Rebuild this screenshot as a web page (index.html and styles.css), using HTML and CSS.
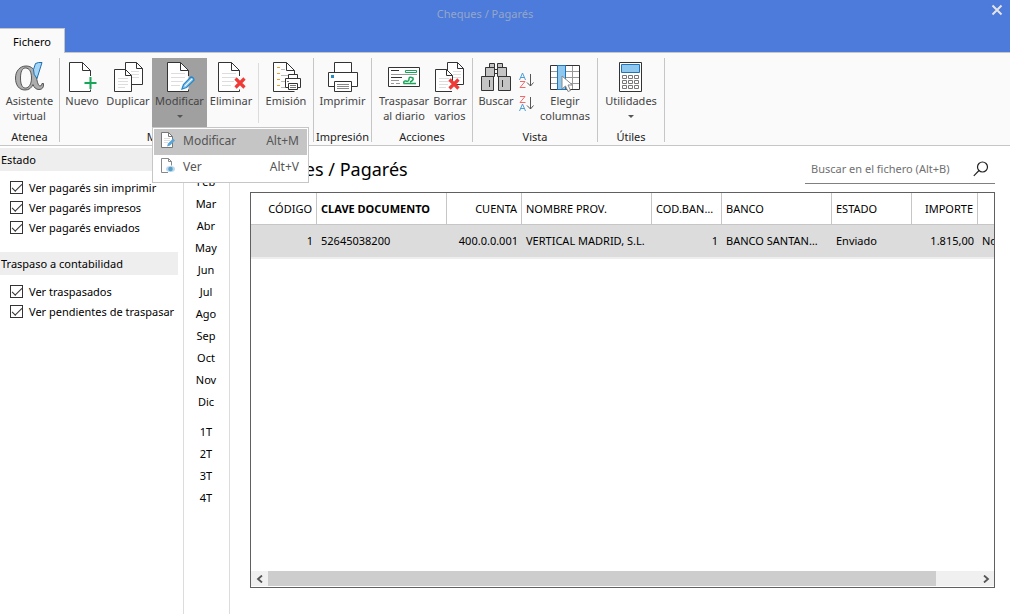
FILE: index.html
```html
<!DOCTYPE html>
<html lang="es">
<head>
<meta charset="utf-8">
<title>Cheques / Pagarés</title>
<link rel="stylesheet" href="styles.css">
</head>
<body>
<svg class="defs" aria-hidden="true">
  <defs>
    <symbol id="page" viewBox="0 0 32 32">
      <path d="M3.5 1.5h13l8 8v21h-21z" fill="#fff"/>
      <path d="M24.500 15V9.500l-8-8h-13v29H24.500v-2M16.500 1.500v8h8" fill="none" stroke="#333"/>
    </symbol>
    <symbol id="page-lines" viewBox="0 0 32 32">
      <use href="#page"/>
      <path d="M7 12.500h14M7 16.500h14M7 20.500h12M7 24.500h9" stroke="#ddd"/>
    </symbol>
    <symbol id="pencil" viewBox="0 0 14 14">
      <path d="M1 13l1.500-4.500L10 1q2.500 0 3 3l-7.500 7.500z" fill="#9cd0f0" stroke="#2788c9" stroke-width="1.300"/>
      <path d="M4 10l7-7" stroke="#fff"/>
    </symbol>
  </defs>
</svg>
<div class="app">
  <header class="titlebar">
    <div class="window-title">Cheques / Pagarés</div>
    <button class="close" aria-label="Cerrar"><svg width="12" height="12" viewBox="0 0 12 12"><path d="M1.500 1.500l9 9M10.500 1.500l-9 9" stroke="#e4e4e4" stroke-width="2"/></svg></button>
    <button class="tab">Fichero</button>
  </header>

  <nav class="ribbon">
    <section class="group g-atenea">
      <div class="tools">
        <button class="tool w56"><svg width="32" height="32" viewBox="0 0 32 32"><path fill-rule="evenodd" d="M12 5c6 0 9 4 10 9 1 6 2 11 4 11q2 0 2-2.500h1.500q.5 6-4.500 6c-3 0-5-2-6-5-1.500 3.500-4 5.500-8 5.500C5 29 1.500 24 1.500 17S6 5 12 5zM11.500 7C8 7 6.500 11 6.500 17s1.500 10 5 10 6-4 6-10-2-10-6-10z" fill="#adadad" stroke="#555"/><path d="M21.500 2.500q3-1.500 6.500-1L23 17.500q-4-4-3.500-9z" fill="#a5d6f7" stroke="#1f6fae"/></svg><span>Asistente<br>virtual</span></button>
      </div>
      <h2>Atenea</h2>
    </section>
    <section class="group g-mant">
      <div class="tools start">
        <button class="tool"><svg width="32" height="32" viewBox="0 0 32 32"><use href="#page"/><path d="M24.500 16v12M18.500 22h12" stroke="#fafafa" stroke-width="4"/><path d="M24.500 16v12M18.500 22h12" stroke="#18a558" stroke-width="2"/></svg><span>Nuevo</span></button>
        <button class="tool w48"><svg width="32" height="32" viewBox="0 0 32 32"><path d="M13.500 1.500h11l6 6v16h-17z" fill="#fff" stroke="#333"/><path d="M24.500 1.500v6h6" fill="none" stroke="#333"/><path d="M19 10.500h8M19 13.500h8M19 16.500h8" stroke="#ddd"/><path d="M2.500 8.500h11l6 6v16h-17z" fill="#fff" stroke="#333"/><path d="M13.500 8.500v6h6" fill="none" stroke="#333"/><path d="M6 17.500h10M6 20.500h10M6 23.500h10M6 26.500h7" stroke="#ddd"/></svg><span>Duplicar</span></button>
        <div class="dropdown">
          <button class="tool w56 active" aria-expanded="true"><svg width="32" height="32" viewBox="0 0 32 32"><use href="#page-lines"/><use href="#pencil" x="17" y="15" width="14" height="14"/></svg><span>Modificar</span><i class="caret"></i></button>
          <div class="menu" role="menu">
            <button class="menu-item selected" role="menuitem"><svg width="18" height="18" viewBox="0 0 18 18"><path d="M2.500 1.500h7l4 4v11h-11z" fill="#fff" stroke="#777"/><path d="M9.500 1.500v4h4" fill="none" stroke="#777"/><path d="M5 7.500h6M5 9.500h6M5 11.500h4" stroke="#ddd"/><path d="M8 15.500l1-3 5-5 2 2-5 5z" fill="#59a5d8"/></svg><span>Modificar</span><kbd>Alt+M</kbd></button>
            <button class="menu-item" role="menuitem"><svg width="18" height="18" viewBox="0 0 18 18"><path d="M9 15.500H2.500v-14h7l3 3v4M9.500 1.500v3h3" fill="none" stroke="#888"/><ellipse cx="11.500" cy="12" rx="4.500" ry="3" fill="#bcd9ec"/><circle cx="11.500" cy="12" r="2.300" fill="#5b9dcb"/></svg><span>Ver</span><kbd>Alt+V</kbd></button>
          </div>
        </div>
        <button class="tool w48"><svg width="32" height="32" viewBox="0 0 32 32"><use href="#page-lines"/><path d="M20.500 17.500l9 9M29.500 17.500l-9 9" stroke="#f03a37" stroke-width="3.200"/></svg><span>Eliminar</span></button>
        <div class="divider"></div>
        <button class="tool w48"><svg width="32" height="32" viewBox="0 0 32 32"><path d="M3.500 1.500h13l8 8v21h-21z" fill="#fff"/><path d="M24.500 30.500h-21v-29h13l8 8V13M16.500 1.500v8h8" fill="none" stroke="#333"/><path d="M7 6.500h3M7 12.500h3M7 18.500h3M7 24.500h3" stroke="#f0a01e"/><path d="M11 8.500h4M11 14.500h8M11 20.500h4M11 26.500h4" stroke="#bbb"/><path d="M18.500 17.500v-4h9v4M15.500 26.500v-9h15v9z" fill="#fff" stroke="#333"/><path d="M18.500 22.500h9v6h-9z" fill="#fff" stroke="#333"/><path d="M20 24.500h6M20 26.500h6M17 20.500h2" stroke="#777"/></svg><span>Emisión</span></button>
      </div>
      <h2>Mantenimiento</h2>
    </section>
    <section class="group g-imp">
      <div class="tools">
        <button class="tool"><svg width="32" height="32" viewBox="0 0 32 32"><path d="M7.500 11.500v-10h17v10" fill="#fff" stroke="#333"/><path d="M7.500 25.500h-6v-14h29v14h-6" fill="#fff" stroke="#333"/><path d="M7.500 20.500h17v10h-17z" fill="#fff" stroke="#333"/><path d="M10 23.500h12M10 25.500h12M10 27.500h12" stroke="#888"/><path d="M4 14h3v3H4z" fill="#2788c9"/></svg><span>Imprimir</span></button>
      </div>
      <h2>Impresión</h2>
    </section>
    <section class="group g-acc">
      <div class="tools end">
        <button class="tool w48"><svg width="32" height="32" viewBox="0 0 32 32"><path d="M.5 6.500h31v19H.5z" fill="#fff" stroke="#333"/><path d="M3 9.500h8M3 16.500h11" stroke="#333"/><path d="M3 13.500h26" stroke="#999"/><path d="M17.500 9.500h11v2h-11z" fill="#fff" stroke="#18a558"/><path d="M3 19.500h8M3 22.500h3M8 22.500h4" stroke="#999"/><path d="M28 22.500H16q-1-3 2-2.500 3 1 3-2t4-1q1 2-3 4" fill="none" stroke="#18a558" stroke-width="1.500"/></svg><span>Traspasar<br>al diario</span></button>
        <button class="tool"><svg width="32" height="32" viewBox="0 0 32 32"><path d="M13.500 1.500h10l6 6v16h-16z" fill="#fff" stroke="#333"/><path d="M23.500 1.500v6h6" fill="none" stroke="#333"/><path d="M19 10.500h8M19 13.500h8M19 16.500h8" stroke="#ddd"/><path d="M18 30.500H1.500v-22h11l6 6V20" fill="#fff" stroke="#333"/><path d="M12.500 8.500v6h6" fill="none" stroke="#333"/><path d="M5 17.500h10M5 20.500h10M5 23.500h9M5 26.500h7" stroke="#ddd"/><path d="M15.500 18.500l9 9M24.500 18.500l-9 9" stroke="#f03a37" stroke-width="3.200"/></svg><span>Borrar<br>varios</span></button>
      </div>
      <h2>Acciones</h2>
    </section>
    <section class="group g-vista">
      <div class="tools">
        <button class="tool"><svg width="32" height="32" viewBox="0 0 32 32"><g fill="#c4c4c4" stroke="#333"><path d="M9.500 2.500h5v4h-5zM17.500 2.500h5v4h-5zM5.500 6.500h9v9h-9zM17.500 6.500h9v9h-9zM1.500 15.500h12v14h-12zM18.500 15.500h12v14h-12z"/><path d="M14.500 8.500h3v4h-3zM9.500 19v7M22.500 19v7" fill="none"/></g></svg><span>Buscar</span></button>
        <div class="sorts">
          <button class="sort" aria-label="Ordenar ascendente"><svg width="16" height="18" viewBox="0 0 16 18"><path d="M1.500 8l3-7 3 7M2.500 5.500h4" fill="none" stroke="#4d9fd6"/><path d="M2 9.500h5l-5 6h5.500" fill="none" stroke="#ef6b6b"/><path d="M12.500 2v12M9 10.500l3.500 3.500 3-3.500" fill="none" stroke="#555"/></svg></button>
          <button class="sort" aria-label="Ordenar descendente"><svg width="16" height="18" viewBox="0 0 16 18"><path d="M2 1.500h5l-5 6h5.500" fill="none" stroke="#ef6b6b"/><path d="M1.500 16l3-7 3 7M2.500 13.500h4" fill="none" stroke="#4d9fd6"/><path d="M12.500 2v12M9 10.500l3.500 3.500 3-3.500" fill="none" stroke="#555"/></svg></button>
        </div>
        <button class="tool w62"><svg width="32" height="32" viewBox="0 0 32 32"><path d="M1.500 4.500h29v24h-29z" fill="#fff" stroke="#333"/><path d="M2 10.500h28M2 16.500h28M2 22.500h28M23.500 5v23" stroke="#999"/><path d="M8.500 4.500h8v24h-8z" fill="#8fc8ee" stroke="#2273b5"/><path d="M13 15v13l3.500-3 2.500 5.500 2.500-1-2.500-5.500h4.500z" fill="#fff" stroke="#888"/></svg><span>Elegir<br>columnas</span></button>
      </div>
      <h2>Vista</h2>
    </section>
    <section class="group g-util">
      <div class="tools">
        <button class="tool"><svg width="32" height="32" viewBox="0 0 32 32"><path d="M4.500 1.500h22v29h-22z" fill="#fff" stroke="#333"/><path d="M6.500 3.500h18v8h-18z" fill="#8fc8ee" stroke="#2273b5"/><path d="M7.500 14.500h4v3h-4zM13.500 14.500h4v3h-4zM19.500 14.500h4v3h-4zM7.500 19.500h4v3h-4zM13.500 19.500h4v3h-4zM19.500 19.500h4v3h-4zM7.500 24.500h4v3h-4zM13.500 24.500h4v3h-4zM19.500 24.500h4v3h-4z" fill="#fff" stroke="#777"/></svg><span>Utilidades</span><i class="caret"></i></button>
      </div>
      <h2>Útiles</h2>
    </section>
  </nav>

  <div class="body">
    <aside class="filters">
      <fieldset>
        <legend>Estado</legend>
        <label><input type="checkbox" checked>Ver pagarés sin imprimir</label>
        <label><input type="checkbox" checked>Ver pagarés impresos</label>
        <label><input type="checkbox" checked>Ver pagarés enviados</label>
      </fieldset>
      <fieldset>
        <legend>Traspaso a contabilidad</legend>
        <label><input type="checkbox" checked>Ver traspasados</label>
        <label><input type="checkbox" checked>Ver pendientes de traspasar</label>
      </fieldset>
    </aside>
    <div class="periods">
      <button>Ene</button><button>Feb</button><button>Mar</button><button>Abr</button><button>May</button><button>Jun</button><button>Jul</button><button>Ago</button><button>Sep</button><button>Oct</button><button>Nov</button><button>Dic</button>
      <button class="first-quarter">1T</button><button>2T</button><button>3T</button><button>4T</button>
    </div>
    <main>
      <div class="heading">
        <h1>Cheques / Pagarés</h1>
        <div class="search">
          <input type="text" aria-label="Buscar en el fichero" placeholder="Buscar en el fichero (Alt+B)">
          <button aria-label="Buscar"><svg width="16" height="16" viewBox="0 0 16 16"><circle cx="9.500" cy="6" r="5" fill="none" stroke="#222" stroke-width="1.200"/><path d="M6 9.500L.8 14.800" stroke="#222" stroke-width="1.200"/></svg></button>
        </div>
      </div>
      <div class="grid">
        <div class="viewport">
          <table>
            <colgroup><col class="c66"><col class="c130"><col class="c75"><col class="c130"><col class="c70"><col class="c110"><col class="c80"><col class="c66"><col class="c66"></colgroup>
            <thead><tr><th class="num">CÓDIGO</th><th class="sorted">CLAVE DOCUMENTO</th><th class="num">CUENTA</th><th>NOMBRE PROV.</th><th class="num">COD.BANCO</th><th>BANCO</th><th>ESTADO</th><th class="num">IMPORTE</th><th></th></tr></thead>
            <tbody><tr><td class="num">1</td><td>52645038200</td><td class="num">400.0.0.001</td><td>VERTICAL MADRID, S.L.</td><td class="num">1</td><td>BANCO SANTANDER</td><td>Enviado</td><td class="num">1.815,00</td><td>No</td></tr></tbody>
          </table>
        </div>
        <div class="scrollbar">
          <button aria-label="Desplazar a la izquierda"><svg width="8" height="8" viewBox="0 0 8 8"><path d="M6 .5L2 4l4 3.500" fill="none" stroke="#555" stroke-width="1.800"/></svg></button>
          <div class="track"><div class="thumb"></div></div>
          <button aria-label="Desplazar a la derecha"><svg width="8" height="8" viewBox="0 0 8 8"><path d="M2 .5L6 4 2 7.500" fill="none" stroke="#555" stroke-width="1.800"/></svg></button>
        </div>
      </div>
    </main>
  </div>
</div>
</body>
</html>
```
FILE: styles.css
```css
* { box-sizing: border-box; }
body { margin: 0; font: 11px/15px "Noto Sans", "Open Sans", sans-serif; color: #000; background: #fff; }
button { font: inherit; color: inherit; background: none; border: 0; padding: 0; margin: 0; }
svg { display: block; flex: none; }
.defs { position: absolute; width: 0; height: 0; }
.app { display: flex; flex-direction: column; min-height: 100vh; }

.titlebar { display: grid; grid-template-columns: 1fr auto; grid-template-rows: 28px 24px; background: #4c7bdb; }
.window-title { grid-column: 1 / -1; grid-row: 1; justify-self: center; align-self: center; padding: 0 40px 2px 0; color: #95a6c8; }
.close { grid-column: 2; grid-row: 1; width: 26px; display: grid; place-items: center; align-self: start; height: 20px; }
.tab { grid-column: 1; grid-row: 2; justify-self: start; position: relative; z-index: 1; width: 65px; margin-bottom: -1px; background: #fafafa; border: 1px solid #c6c6c6; border-width: 1px 1px 0 0; }

.ribbon { display: flex; height: 94px; padding: 5px 0 3px; background: #fafafa; border-top: 1px solid #c6c6c6; border-bottom: 1px solid #c6c6c6; }
.group { display: flex; flex-direction: column; border-right: 1px solid #c6c6c6; }
.g-atenea { width: 60px; }
.g-mant { width: 254px; }
.g-imp { width: 58px; }
.g-acc { width: 101px; }
.g-vista { width: 125px; }
.g-util { width: 67px; }
.group h2 { margin: 0; font: inherit; line-height: 11px; text-align: center; color: #222; white-space: nowrap; }
.tools { display: flex; justify-content: center; flex: 1; }
.start { justify-content: flex-start; }
.end { justify-content: flex-end; }
.tool { display: flex; flex-direction: column; align-items: center; justify-content: flex-start; flex: none; width: 44px; height: 69px; padding-top: 3px; white-space: nowrap; color: #444; }
.tool span { text-align: center; }
.w48 { width: 48px; }
.w56 { width: 55px; }
.w62 { width: 62px; }
.active { background: #a0a0a0; }
.caret { margin-top: 7px; border: 3px solid transparent; border-top-color: #555; border-bottom: 0; }
.divider { width: 1px; height: 60px; margin: 5px 3px; background: #dcdcdc; }
.sorts { display: flex; flex-direction: column; gap: 5px; padding-top: 14px; }
.sort { width: 16px; display: grid; place-items: center; }

.dropdown { position: relative; }
.menu { position: absolute; z-index: 2; top: 69px; left: 0; width: 157px; padding: 1px; background: #fff; border: 1px solid #c6c6c6; }
.menu-item { display: flex; align-items: center; width: 100%; height: 26px; padding: 0 8px 4px 5px; gap: 6px; font-size: 12px; color: #555; }
.selected { background: #c5c5c5; }
.menu-item kbd { margin-left: auto; font: inherit; }

.body { display: flex; flex: 1; }
.filters { width: 183px; padding: 2px 5px 0 0; }
fieldset { margin: 0 0 15px; padding: 0; border: 0; min-width: 0; }
legend { width: 100%; margin-bottom: 6px; padding: 4px 1px; background: #eee; }
.filters label { display: flex; align-items: center; height: 20px; padding-left: 10px; gap: 6px; white-space: nowrap; }
input[type="checkbox"] { appearance: none; display: grid; place-items: center; width: 13px; height: 13px; margin: 0; border: 1px solid #333; background: #fff; }
input[type="checkbox"]::before { content: ""; width: 9px; height: 4px; border: solid #333; border-width: 0 0 1px 1px; transform: translateY(-1px) rotate(-45deg); }
.periods { display: flex; flex-direction: column; width: 47px; padding: 2px 1px 0 0; border: 1px solid #dcdcdc; border-width: 0 1px; }
.periods button { height: 22px; }
.periods .first-quarter { margin-top: 8px; }

main { display: flex; flex-direction: column; flex: 1; min-width: 0; padding: 0 15px 26px 20px; }
.heading { display: flex; justify-content: space-between; height: 46px; }
h1 { margin: 0; font-size: 18px; font-weight: 400; line-height: 46px; }
.search { display: flex; align-items: center; width: 190px; height: 29px; margin-top: 9px; padding: 0 6px; border-bottom: 1px solid #808080; }
.search input { flex: 1; min-width: 0; border: 0; padding: 0 0 2px; outline: 0; font: inherit; background: none; }
.search input::placeholder { color: #707070; opacity: 1; }
.grid { display: flex; flex-direction: column; flex: 1; border: 1px solid #606060; }
.viewport { flex: 1; overflow: hidden; }
table { table-layout: fixed; width: 793px; border-collapse: separate; border-spacing: 0; }
.c66 { width: 66px; } .c70 { width: 70px; } .c75 { width: 75px; } .c80 { width: 80px; } .c110 { width: 110px; } .c130 { width: 130px; }
th, td { height: 32px; padding: 0 7px 0 4px; text-align: left; font-weight: 400; white-space: nowrap; overflow: hidden; text-overflow: ellipsis; }
th { border-right: 1px solid #c6c6c6; border-bottom: 1px solid #c6c6c6; }
td { height: 34px; padding-bottom: 2px; background: #dcdcdc; border-bottom: 2px solid #eee; }
.num { padding-right: 4px; text-align: right; }
.sorted { font-weight: 700; }
.scrollbar { display: flex; height: 16px; background: #f0f0f0; border-bottom: 1px solid #fff; }
.scrollbar button { display: grid; place-items: center; width: 17px; }
.track { flex: 1; }
.thumb { width: calc(100% - 41px); height: 15px; background: #cdcdcd; }
```
